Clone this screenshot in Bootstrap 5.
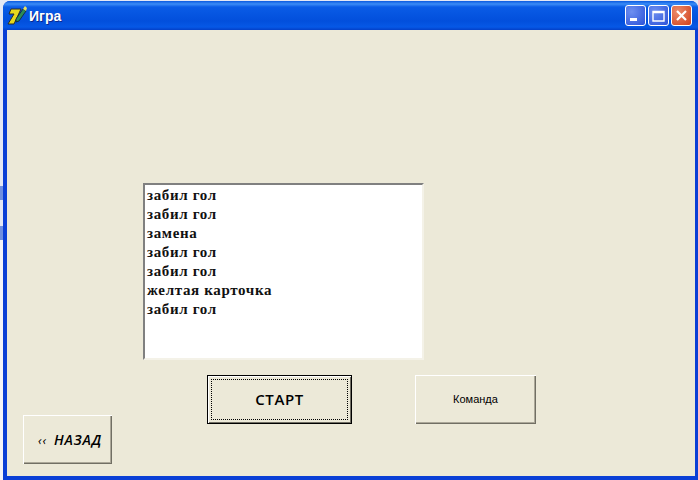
<!DOCTYPE html>
<html>
<head>
  <title>Игра</title>
  <meta name="viewport" content="width=device-width, initial-scale=1.0">
  <link rel="stylesheet" href="https://cdn.jsdelivr.net/npm/bootstrap@5.3.0/dist/css/bootstrap.min.css">
  <style>
    html, body { height: 480px; overflow: hidden; background: #e4e8f4; }
    .desk-strip { width: 3px; flex: none; background: linear-gradient(#e4e8f4 0 186px, #6f8fe0 186px 200px, #e4e8f4 200px 226px, #6f8fe0 226px 240px, #f4f4f8 240px); }
    .xp-window { flex: 1; margin-top: 1px; background: #0a3fd6; border-radius: 7px 7px 0 0; padding: 0 3px 4px 4px; }
    .xp-title { height: 29px; margin-left: -4px; margin-right: -3px; padding: 0 6px 0 3px; border-radius: 7px 7px 0 0;
      background: linear-gradient(#0a5ae0 0, #3b8cf6 3px, #0a5ce6 6px, #024fdc 20px, #0658e6 26px, #0340c8 29px); }
    .title-icon { margin-right: 1px; flex: none; }
    .xp-caption { color: #fff; font: bold 14px "Liberation Sans", sans-serif; text-shadow: 1px 1px 0 #0a2a90; }
    .cap-group { gap: 2px; }
    .cap-btn { width: 21px; height: 21px; border: 1px solid #fff; border-radius: 3px; background: radial-gradient(circle at 30% 30%, #6d8ff0, #2c52d8); }
    .cap-close { background: radial-gradient(circle at 30% 30%, #ec8c6c, #d0401c); }
    .xp-client { height: 446px; background: #ece9d8; padding-top: 153px; }
    .game-log { width: 281px; height: 177px; margin-left: 136px; background: #fff; padding: 1px 2px;
      border: 2px solid; border-color: #808080 #f4f2e8 #f4f2e8 #808080;
      font: bold 15px/19px "Liberation Serif", serif; letter-spacing: .65px; color: #111; }
    .btn-row { height: 89px; margin-top: 15px; }
    .form-btn { height: 49px; background: #ece9d8; color: #000; border: 0; padding: 0;
      box-shadow: inset 1px 1px 0 #fff, inset -1px -1px 0 #716f64, inset -2px -2px 0 #aca899; }
    .btn-back { width: 89px; margin-left: 16px; padding-left: 5px; font: italic 600 14px "Open Sans", sans-serif; letter-spacing: .9px; }
    .back-arrows { margin-right: 7px; font-size: 13px; font-weight: 400; }
    .btn-start { width: 145px; margin-left: 95px; outline: 1px solid #000; outline-offset: -1px; font: 600 15px "Open Sans", sans-serif; letter-spacing: .6px;
      box-shadow: inset 2px 2px 0 #fff, inset -2px -2px 0 #716f64; }
    .btn-start span { display: flex; align-items: center; justify-content: center; border: 1px dotted #000; margin: 4px; height: 41px; padding-bottom: 2px; }
    .btn-team { width: 121px; margin-left: 63px; padding-bottom: 2px; font: 11px "Liberation Sans", sans-serif; }
  </style>
</head>
<body class="d-flex">
  <div class="desk-strip"></div>
  <div class="xp-window">
    <div class="xp-title d-flex align-items-center">
      <svg width="22" height="22" viewBox="0 0 22 22" class="title-icon">
        <path d="M5 4h10l-7 15H2l6-10H3z" fill="#e6d81e" stroke="#2a2a2a" stroke-width="1"/>
        <path d="M10 14l7-10 3 2-7 10-3 1z" fill="#2c8c58" stroke="#123" stroke-width=".8"/>
        <path d="M17 4l2-3 2 2-1 3z" fill="#e8e060"/>
      </svg>
      <span class="xp-caption">Игра</span>
      <div class="ms-auto d-flex cap-group">
        <div class="cap-btn d-flex align-items-end p-1"><svg width="9" height="4" viewBox="0 0 9 4"><rect y="1" width="7" height="3" fill="#fff"/></svg></div>
        <div class="cap-btn d-flex align-items-center justify-content-center"><svg width="13" height="12" viewBox="0 0 13 12"><path d="M1 1.5h11V11H1z M1 2.5h11" fill="none" stroke="#fff" stroke-width="1.4"/></svg></div>
        <div class="cap-btn cap-close d-flex align-items-center justify-content-center"><svg width="13" height="13" viewBox="0 0 13 13"><path d="M2 2l9 9M11 2l-9 9" stroke="#fff" stroke-width="2.2"/></svg></div>
      </div>
    </div>
    <div class="xp-client">
      <div class="game-log">
        <div>забил гол</div>
        <div>забил гол</div>
        <div>замена</div>
        <div>забил гол</div>
        <div>забил гол</div>
        <div>желтая карточка</div>
        <div>забил гол</div>
      </div>
      <div class="d-flex btn-row">
        <button class="form-btn btn-back align-self-end" type="button"><span class="back-arrows">‹‹</span>НАЗАД</button>
        <button class="form-btn btn-start align-self-start" type="button"><span>СТАРТ</span></button>
        <button class="form-btn btn-team align-self-start" type="button">Команда</button>
      </div>
    </div>
  </div>
  <script src="https://cdn.jsdelivr.net/npm/bootstrap@5.3.0/dist/js/bootstrap.bundle.min.js"></script>
</body>
</html>
